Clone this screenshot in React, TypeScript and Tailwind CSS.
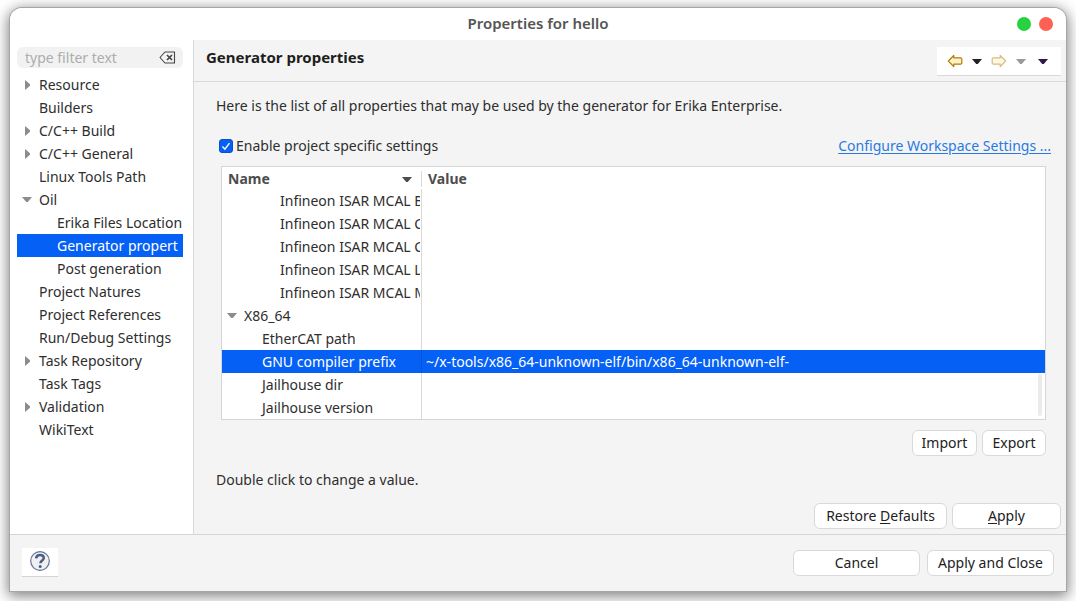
import { useState } from "react";

type TreeItem = { label: string; state?: "open" | "closed"; child?: boolean; selected?: boolean };

const TREE: TreeItem[] = [
  { label: "Resource", state: "closed" },
  { label: "Builders" },
  { label: "C/C++ Build", state: "closed" },
  { label: "C/C++ General", state: "closed" },
  { label: "Linux Tools Path" },
  { label: "Oil", state: "open" },
  { label: "Erika Files Location", child: true },
  { label: "Generator propert", child: true, selected: true },
  { label: "Post generation", child: true },
  { label: "Project Natures" },
  { label: "Project References" },
  { label: "Run/Debug Settings" },
  { label: "Task Repository", state: "closed" },
  { label: "Task Tags" },
  { label: "Validation", state: "closed" },
  { label: "WikiText" },
];

type Row = { name: string; level: 1 | 2 | 3; value?: string; selected?: boolean };

const ROWS: Row[] = [
  { name: "Infineon ISAR MCAL B", level: 3 },
  { name: "Infineon ISAR MCAL C", level: 3 },
  { name: "Infineon ISAR MCAL C", level: 3 },
  { name: "Infineon ISAR MCAL L", level: 3 },
  { name: "Infineon ISAR MCAL M", level: 3 },
  { name: "X86_64", level: 1 },
  { name: "EtherCAT path", level: 2 },
  {
    name: "GNU compiler prefix",
    level: 2,
    value: "~/x-tools/x86_64-unknown-elf/bin/x86_64-unknown-elf-",
    selected: true,
  },
  { name: "Jailhouse dir", level: 2 },
  { name: "Jailhouse version", level: 2 },
];

const INDENT = { 1: "pl-1", 2: "pl-10", 3: "pl-[58px]" };

function DownTriangle({ className }: { className: string }) {
  return (
    <svg viewBox="0 0 10 5" className={`h-[5px] w-[10px] shrink-0 ${className}`} fill="currentColor" aria-hidden="true">
      <path d="M0 0h10L5.8 5H4.2z" />
    </svg>
  );
}

function RightTriangle() {
  return (
    <svg viewBox="0 0 5 10" className="h-[10px] w-[5px] text-[#8c8c8c]" fill="currentColor" aria-hidden="true">
      <path d="M0 0v10l5-4.2V4.2z" />
    </svg>
  );
}

function Arrow({ forward }: { forward?: boolean }) {
  return (
    <svg
      viewBox="0 0 16 14"
      className={forward ? "h-[14px] w-4 -scale-x-100 opacity-50" : "h-[14px] w-4"}
      aria-hidden="true"
    >
      <path
        d="M1.3 7 6.8 1.5v2.4h7.1l.9.9v4.5l-.9.9H6.8v2.4z"
        fill="#fff3c4"
        stroke="#b5780a"
        strokeWidth="1.2"
        strokeLinejoin="round"
      />
    </svg>
  );
}

function Button({ children, className }: { children: React.ReactNode; className: string }) {
  return (
    <button
      type="button"
      className={`flex h-[26px] items-center justify-center rounded-md border border-[#d9d9d9] bg-white whitespace-pre text-[#222] ${className}`}
    >
      {children}
    </button>
  );
}

export default function App() {
  const [enabled, setEnabled] = useState(true);
  const [filter, setFilter] = useState("");

  return (
    <div className="flex min-h-screen flex-col overflow-hidden bg-white px-[10px] pt-2 pb-[10px] font-['Noto_Sans',sans-serif] text-sm leading-5 text-[#2e2e2e]">
      <div className="flex flex-1 flex-col overflow-hidden rounded-t-xl bg-[#f4f4f4] shadow-[0_0_0_1px_#a6a6a6,0_3px_14px_2px_rgba(0,0,0,0.5)]">
        <header className="grid h-8 grid-cols-[1fr_auto_1fr] items-center bg-white">
          <h1 className="col-start-2 pb-[2px] text-[15px] font-semibold text-[#555]">Properties for hello</h1>
          <div className="flex justify-end gap-2 pr-[13px]">
            <button type="button" aria-label="Maximize" className="size-[14px] rounded-full bg-[#28d13f]" />
            <button type="button" aria-label="Close" className="size-[14px] rounded-full bg-[#ff6054]" />
          </div>
        </header>

        <div className="flex flex-1">
          <aside className="w-[184px] shrink-0 border-r border-[#d9d9d9] bg-white pt-[7px] pr-[10px] pl-[7px]">
            <div className="flex h-[21px] items-center rounded-md bg-[#f2f2f2] pr-[7px] pl-2">
              <input
                type="text"
                aria-label="Filter"
                placeholder="type filter text"
                value={filter}
                onChange={(e) => setFilter(e.target.value)}
                className="w-full min-w-0 bg-transparent outline-none placeholder:text-[#adadad]"
              />
              <button type="button" aria-label="Clear filter" onClick={() => setFilter("")} className="shrink-0">
                <svg viewBox="0 0 17 13" className="h-[13px] w-[17px]" fill="none" stroke="#444" aria-hidden="true">
                  <path d="M5.9 1h9.6v11H5.9L1 6.5z" strokeWidth="1.1" strokeLinejoin="round" />
                  <path d="m8 4 5 5m0-5L8 9" strokeWidth="1.7" />
                </svg>
              </button>
            </div>
            <ul className="mt-[5px]">
              {TREE.map((item) => (
                <li
                  key={item.label}
                  className={`flex h-[23px] items-center overflow-hidden whitespace-nowrap ${
                    item.selected ? "bg-[#0560f5] text-white" : ""
                  } ${item.child ? "pl-10" : "pl-1"}`}
                >
                  {!item.child && (
                    <span className="flex w-[18px] shrink-0 justify-center pr-[6px]">
                      {item.state === "closed" && <RightTriangle />}
                      {item.state === "open" && <DownTriangle className="text-[#8c8c8c]" />}
                    </span>
                  )}
                  {item.label}
                </li>
              ))}
            </ul>
          </aside>

          <main className="flex min-w-0 flex-1 flex-col">
            <div className="flex h-[42px] items-start justify-between border-b border-[#d9d9d9] pr-[5px] pl-3">
              <h2 className="pt-[7px] text-[15px] font-bold text-[#1e1e1e]">Generator properties</h2>
              <div className="mt-[7px] flex h-[29px] items-center border-b border-[#d9d9d9] bg-white pr-[13px] pl-[10px]">
                <button type="button" aria-label="Back">
                  <Arrow />
                </button>
                <button type="button" aria-label="Back history" className="ml-[9px]">
                  <DownTriangle className="text-[#222]" />
                </button>
                <button type="button" aria-label="Forward" className="ml-[9px]">
                  <Arrow forward />
                </button>
                <button type="button" aria-label="Forward history" className="ml-[9px]">
                  <DownTriangle className="text-[#999]" />
                </button>
                <button type="button" aria-label="View menu" className="ml-3">
                  <DownTriangle className="text-[#2c1a4a]" />
                </button>
              </div>
            </div>

            <div className="flex flex-1 flex-col pt-[14px] pr-5 pl-[22px]">
              <p>Here is the list of all properties that may be used by the generator for Erika Enterprise.</p>
              <div className="mt-5 flex items-center justify-between">
                <label className="flex items-center gap-[3px] pl-[3px]">
                  <span className="relative flex size-[14px]">
                    <input
                      type="checkbox"
                      checked={enabled}
                      onChange={(e) => setEnabled(e.target.checked)}
                      className="size-[14px] appearance-none rounded-[3px] border border-[#0a50c8] bg-white checked:bg-[#0560f5]"
                    />
                    {enabled && (
                      <svg
                        viewBox="0 0 14 14"
                        className="pointer-events-none absolute inset-0"
                        fill="none"
                        stroke="#fff"
                        strokeWidth="1.4"
                        aria-hidden="true"
                      >
                        <path d="m3.4 7.6 2.5 2.5 4.6-6" />
                      </svg>
                    )}
                  </span>
                  Enable project specific settings
                </label>
                <a href="#workspace" className="-mr-[5px] text-[#2a7ae2] underline underline-offset-2">
                  Configure Workspace Settings ...
                </a>
              </div>

              <div className="relative mt-[10px] ml-[5px] border border-[#d5d5d5] bg-white">
                <table className="w-full table-fixed border-collapse">
                  <thead>
                    <tr className="h-[22px] text-left text-[#4d4d4d]">
                      <th className="w-[200px] p-0 pt-[2px] font-bold">
                        <div className="flex items-center justify-between border-r border-[#d9d9d9] pr-[9px] pl-[6px] leading-4">
                          Name
                          <DownTriangle className="text-[#4d4d4d]" />
                        </div>
                      </th>
                      <th className="p-0 pt-[2px] pl-[6px] leading-4 font-bold">Value</th>
                    </tr>
                  </thead>
                  <tbody>
                    {ROWS.map((row, i) => (
                      <tr key={i} className={`h-[23px] ${row.selected ? "bg-[#0560f5] text-white" : ""}`}>
                        <td className="p-0">
                          <div
                            className={`border-r pr-px ${row.selected ? "border-[#0553d6]" : "border-[#d9d9d9]"}`}
                          >
                            <div
                              className={`flex h-[23px] items-center overflow-hidden whitespace-nowrap ${INDENT[row.level]}`}
                            >
                              {row.level === 1 && (
                                <span className="flex w-[18px] shrink-0 pl-px">
                                  <DownTriangle className="text-[#8c8c8c]" />
                                </span>
                              )}
                              {row.name}
                            </div>
                          </div>
                        </td>
                        <td className="p-0 pl-1 whitespace-nowrap">{row.value}</td>
                      </tr>
                    ))}
                  </tbody>
                </table>
                <div className="absolute right-[3px] bottom-[3px] h-[42px] w-1 rounded-full bg-[#ebebeb]" />
              </div>

              <div className="mt-[10px] flex justify-end gap-[5px]">
                <Button className="w-[65px]">Import</Button>
                <Button className="w-16">Export</Button>
              </div>
              <p className="mt-[14px]">Double click to change a value.</p>
              <div className="mt-auto -mr-[15px] flex justify-end gap-[5px] pb-[5px]">
                <Button className="w-[133px]">
                  Restore <u className="underline-offset-2">D</u>efaults
                </Button>
                <Button className="w-[109px]">
                  <u className="underline-offset-2">A</u>pply
                </Button>
              </div>
            </div>
          </main>
        </div>

        <footer className="flex h-[57px] items-center justify-between border-t border-[#d5d5d5] px-3 pb-px">
          <button
            type="button"
            aria-label="Help"
            className="flex h-[29px] w-9 items-start justify-center border-b border-[#d5d5d5] bg-white pt-[3px]"
          >
            <svg viewBox="0 0 20 20" className="size-5" fill="none" aria-hidden="true">
              <circle cx="10" cy="10" r="9.3" fill="#f0f0f0" stroke="#62769a" strokeWidth="1.2" />
              <path d="M6.2 7.4C6.3 5.1 7.8 4 10 4s3.8 1.1 3.8 3c0 2.5-3.4 2.6-3.4 5.3" stroke="#4a5f88" strokeWidth="2.5" />
              <circle cx="10.2" cy="15.5" r="1.5" fill="#4a5f88" />
            </svg>
          </button>
          <div className="flex gap-[7px]">
            <Button className="w-[127px]">Cancel</Button>
            <Button className="w-[127px]">Apply and Close</Button>
          </div>
        </footer>
      </div>
    </div>
  );
}
